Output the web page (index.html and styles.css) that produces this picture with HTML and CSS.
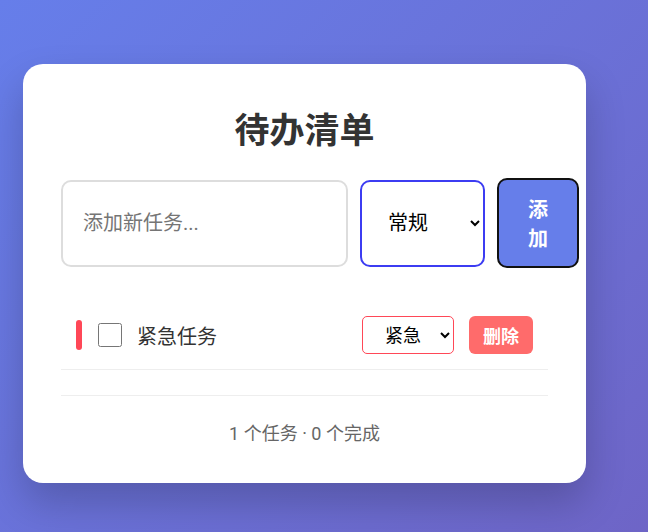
FILE: index.html
```html
<!DOCTYPE html>
<html lang="zh-CN">
<head>
    <meta charset="UTF-8">
    <title>待办清单</title>
    <link rel="stylesheet" href="styles.css">
</head>
<body>
    <div class="card">
        <h1>待办清单</h1>

        <div class="add-row">
            <input class="new-task" type="text" placeholder="添加新任务...">
            <select class="level">
                <option>常规</option>
                <option>重要</option>
                <option>紧急</option>
            </select>
            <button class="add-btn">添加</button>
        </div>

        <ul class="task-list">
            <li class="task">
                <span class="flag urgent"></span>
                <input class="check" type="checkbox">
                <span class="task-text">紧急任务</span>
                <select class="task-level">
                    <option>常规</option>
                    <option>重要</option>
                    <option selected>紧急</option>
                </select>
                <button class="del-btn">删除</button>
            </li>
        </ul>

        <div class="footer">1 个任务 · 0 个完成</div>
    </div>
</body>
</html>
```

FILE: styles.css
```css
* {
    box-sizing: border-box;
}

body {
    margin: 0;
    min-height: 100vh;
    padding: 64px 23px;
    font-family: "Segoe UI", Roboto, "Noto Sans CJK SC", sans-serif;
    background: linear-gradient(135deg, #667eea 0%, #764ba2 200%);
}

.card {
    width: 563px;
    padding: 38px;
    background: #fff;
    border-radius: 20px;
    box-shadow: 0 20px 40px rgba(0, 0, 0, 0.2);
}

h1 {
    margin: 0 0 25px;
    text-align: center;
    font-size: 35px;
    color: #333;
}

.add-row {
    display: flex;
    align-items: center;
    gap: 12px;
}

.new-task {
    flex: none;
    width: 287px;
    min-width: 0;
    height: 87px;
    padding: 0 20px;
    border: 2px solid #ddd;
    border-radius: 10px;
    font-family: inherit;
    font-size: 20px;
    outline: none;
}

.new-task::placeholder {
    color: #757575;
}

.level {
    flex: none;
    width: 125px;
    height: 87px;
    padding: 0 6px 0 22px;
    border: 2px solid #3c3cf2;
    border-radius: 10px;
    background: #fff;
    font-family: inherit;
    font-size: 20px;
    color: #000;
}

.add-btn {
    flex: none;
    width: 82px;
    padding: 14px 29px;
    border: 2px solid #111;
    border-radius: 10px;
    background: #667eea;
    color: #fff;
    font-family: inherit;
    font-size: 20px;
    font-weight: 600;
}

.task-list {
    list-style: none;
    margin: 33px 0 0;
    padding: 0;
}

.task {
    display: flex;
    align-items: center;
    gap: 12px;
    padding: 15px;
    border-bottom: 1px solid #eee;
}

.flag {
    width: 6px;
    height: 30px;
    border-radius: 3px;
}

.urgent {
    background: #ff4757;
}

.check {
    width: 24px;
    height: 24px;
    margin: 3px 3px 3px 4px;
}

.task-text {
    flex: 1;
    font-size: 20px;
    color: #333;
}

.task-level {
    width: 92px;
    height: 38px;
    padding: 0 4px 0 18px;
    border: 1px solid #ff4757;
    border-radius: 5px;
    background: #fff;
    font-family: inherit;
    font-size: 18px;
    color: #000;
}

.del-btn {
    margin-left: 3px;
    padding: 6px 14px;
    border: none;
    border-radius: 6px;
    background: #ff6b6b;
    color: #fff;
    font-family: inherit;
    font-size: 18px;
    font-weight: 600;
}

.footer {
    margin-top: 25px;
    padding-top: 23px;
    border-top: 1px solid #eee;
    text-align: center;
    font-size: 18px;
    color: #666;
}
```
